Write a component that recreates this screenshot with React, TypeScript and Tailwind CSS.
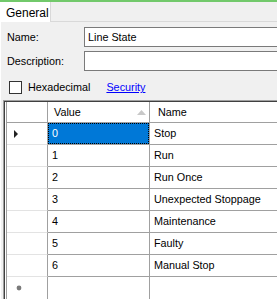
import React from "react";

const rows = [
  { value: "0", name: "Stop" },
  { value: "1", name: "Run" },
  { value: "2", name: "Run Once" },
  { value: "3", name: "Unexpected Stoppage" },
  { value: "4", name: "Maintenance" },
  { value: "5", name: "Faulty" },
  { value: "6", name: "Manual Stop" },
];

function RowMarker({ current, isNew }: { current?: boolean; isNew?: boolean }) {
  if (current) {
    return (
      <svg width="5" height="8" viewBox="0 0 5 8" className="ml-[7px]">
        <polygon points="0,0 4,4 0,8" fill="#222" />
      </svg>
    );
  }
  if (isNew) {
    return (
      <svg width="6" height="6" viewBox="0 0 6 6" className="ml-[9px]">
        <circle cx="3" cy="3" r="2.4" fill="#7a7a7a" />
      </svg>
    );
  }
  return null;
}

export default function App() {
  return (
    <div
      className="w-[277px] h-[299px] overflow-hidden bg-[#f0f0f0] text-black text-[10.8px] flex flex-col"
      style={{ fontFamily: '"Liberation Sans", Arial, sans-serif' }}
    >
      <div className="h-[2px] bg-[#72c96b]" />

      {/* tab strip */}
      <div className="flex h-[21px]">
        <div className="w-[51px] bg-white border-r border-[#d9d9d9] pl-[6px] pt-[3px] text-[12px] leading-[16px]">
          General
        </div>
        <div className="flex-1 border-b border-[#d9d9d9]" />
      </div>

      {/* panel */}
      <div className="flex-1 flex flex-col border-l border-white pt-[5px]">
        <div className="flex items-center h-[20px] pl-[6px]">
          <span className="w-[77px]">Name:</span>
          <div className="flex-1 -mr-[10px] h-[20px] bg-white border border-[#7a7a7a] pl-[3px] flex items-center">
            Line State
          </div>
        </div>
        <div className="flex items-center h-[20px] pl-[6px] mt-[4px]">
          <span className="w-[77px]">Description:</span>
          <div className="flex-1 -mr-[10px] h-[20px] bg-white border border-[#7a7a7a]" />
        </div>

        <div className="flex items-center h-[13px] pl-[8px] mt-[10px]">
          <div className="w-[13px] h-[13px] bg-white border border-[#333]" />
          <span className="ml-[6px]">Hexadecimal</span>
          <span className="ml-[16px] text-[#0000ff] underline">Security</span>
        </div>

        {/* data grid */}
        <div className="mt-[6px] ml-[2px] flex-1 border-t border-l border-[#a0a0a0]">
          <div className="h-full border-t border-l border-[#404040] bg-white pl-px">
            <div className="h-full border-l border-[#a0a0a0]">
              {/* header */}
              <div className="flex h-[21px] border-b border-[#a0a0a0]">
                <div className="w-[41px] border-r border-[#a0a0a0]" />
                <div className="w-[102px] border-r border-[#a0a0a0] flex items-center pl-[6px] relative">
                  Value
                  <svg
                    width="9"
                    height="5"
                    viewBox="0 0 9 5"
                    className="absolute right-[3px] top-[8px]"
                  >
                    <polygon points="4.5,0 9,5 0,5" fill="#c8c8c8" />
                  </svg>
                </div>
                <div className="flex-1 flex items-center pl-[8px]">Name</div>
              </div>

              {rows.map((r, i) => (
                <div key={r.value} className="flex h-[22px]">
                  <div className="w-[41px] border-r border-[#a0a0a0] border-b border-b-[#e3e3e3] flex items-center">
                    <RowMarker current={i === 0} />
                  </div>
                  <div className="w-[102px] border-r border-b border-[#a0a0a0]">
                    {i === 0 ? (
                      <div className="h-full bg-[#0078d7] border border-dotted border-black text-white flex items-center pl-[3px]">
                        {r.value}
                      </div>
                    ) : (
                      <div className="h-full flex items-center pl-[4px]">{r.value}</div>
                    )}
                  </div>
                  <div className="flex-1 border-b border-[#a0a0a0] flex items-center pl-[4px]">
                    {r.name}
                  </div>
                </div>
              ))}

              {/* new row */}
              <div className="flex h-[22px]">
                <div className="w-[41px] border-r border-[#a0a0a0] flex items-center">
                  <RowMarker isNew />
                </div>
                <div className="w-[102px] border-r border-[#a0a0a0]" />
                <div className="flex-1" />
              </div>
            </div>
          </div>
        </div>
      </div>
    </div>
  );
}
